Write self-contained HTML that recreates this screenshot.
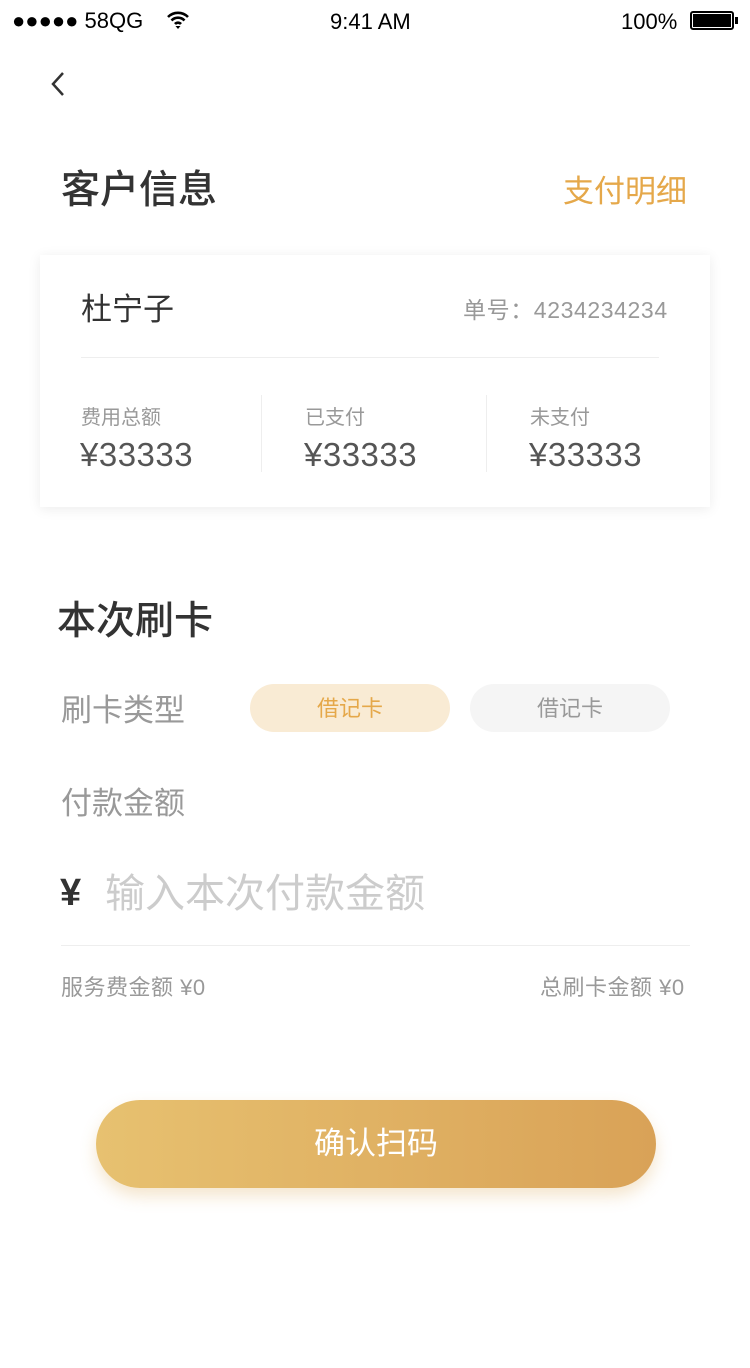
<!DOCTYPE html>
<html><head><meta charset="utf-8"><style>
*{margin:0;padding:0;box-sizing:border-box}
body{width:750px;height:1368px;background:#fff;position:relative;font-family:"Liberation Sans","Noto Sans CJK SC",sans-serif;overflow:hidden}
.a{position:absolute;white-space:nowrap}
</style></head><body>
<div class="a" style="left:12px;top:8px;font-size:22px;color:#000">●●●●● 58QG</div>
<svg class="a" style="left:166px;top:10px" width="24" height="20" viewBox="0 0 24 20"><path d="M2 7a14 14 0 0 1 20 0M5.5 10.5a9 9 0 0 1 13 0M9 14a4 4 0 0 1 6 0" stroke="#000" stroke-width="2.6" fill="none"/><path d="M12 19l-2.5-3h5z" fill="#000"/></svg>
<div class="a" style="left:330px;top:9px;font-size:22px;color:#000">9:41 AM</div>
<div class="a" style="left:621px;top:9px;font-size:22px;color:#000">100%</div>
<div class="a" style="left:690px;top:11px;width:44px;height:19px;border:2px solid #000;border-radius:3px;padding:1px"><div style="width:100%;height:100%;background:#000"></div></div>
<div class="a" style="left:735px;top:17px;width:3px;height:7px;background:#000"></div>
<svg class="a" style="left:46px;top:70px" width="22" height="30"><path d="M17 3L7 14l10 11" stroke="#333" stroke-width="2.5" fill="none"/></svg>
<div class="a" style="left:61px;top:159px;font-size:39px;color:#333;font-weight:500">客户信息</div>
<div class="a" style="left:563px;top:166px;font-size:31px;color:#e5a84a">支付明细</div>
<div class="a" style="left:40px;top:255px;width:670px;height:252px;background:#fff;box-shadow:0 2px 12px rgba(0,0,0,.08)"></div>
<div class="a" style="left:81px;top:284px;font-size:31px;color:#333">杜宁子</div>
<div class="a" style="left:463px;top:291px;font-size:23px;color:#999;letter-spacing:0.6px">单号：4234234234</div>
<div class="a" style="left:81px;top:357px;width:578px;height:1px;background:#eee"></div>
<div class="a" style="left:261px;top:395px;width:1px;height:77px;background:#eee"></div>
<div class="a" style="left:486px;top:395px;width:1px;height:77px;background:#eee"></div>
<div class="a" style="left:81px;top:401px;font-size:20px;color:#999">费用总额</div>
<div class="a" style="left:305px;top:401px;font-size:20px;color:#999">已支付</div>
<div class="a" style="left:530px;top:401px;font-size:20px;color:#999">未支付</div>
<div class="a" style="left:80px;top:436px;font-size:33px;color:#555;letter-spacing:0.5px">¥33333</div>
<div class="a" style="left:304px;top:436px;font-size:33px;color:#555;letter-spacing:0.5px">¥33333</div>
<div class="a" style="left:529px;top:436px;font-size:33px;color:#555;letter-spacing:0.5px">¥33333</div>
<div class="a" style="left:57px;top:590px;font-size:39px;color:#333;font-weight:500">本次刷卡</div>
<div class="a" style="left:61px;top:685px;font-size:31px;color:#999">刷卡类型</div>
<div class="a" style="left:250px;top:684px;width:200px;height:48px;border-radius:24px;background:#f9ebd4;color:#e5a84a;font-size:22px;text-align:center;line-height:50px">借记卡</div>
<div class="a" style="left:470px;top:684px;width:200px;height:48px;border-radius:24px;background:#f5f5f5;color:#999;font-size:22px;text-align:center;line-height:50px">借记卡</div>
<div class="a" style="left:61px;top:778px;font-size:31px;color:#999">付款金额</div>
<div class="a" style="left:60px;top:872px;font-size:38px;color:#333;font-weight:bold">¥</div>
<div class="a" style="left:105px;top:861px;font-size:40px;color:#ccc">输入本次付款金额</div>
<div class="a" style="left:61px;top:945px;width:629px;height:1px;background:#eee"></div>
<div class="a" style="left:61px;top:970px;font-size:22px;color:#999;letter-spacing:0.5px">服务费金额 ¥0</div>
<div class="a" style="left:540px;top:970px;font-size:22px;color:#999;letter-spacing:0.5px">总刷卡金额 ¥0</div>
<div class="a" style="left:96px;top:1100px;width:560px;height:88px;border-radius:44px;background:linear-gradient(90deg,#e7c170,#d9a257);box-shadow:0 8px 16px rgba(220,170,90,.3);color:#fff;font-size:31px;text-align:center;line-height:88px">确认扫码</div>
</body></html>
